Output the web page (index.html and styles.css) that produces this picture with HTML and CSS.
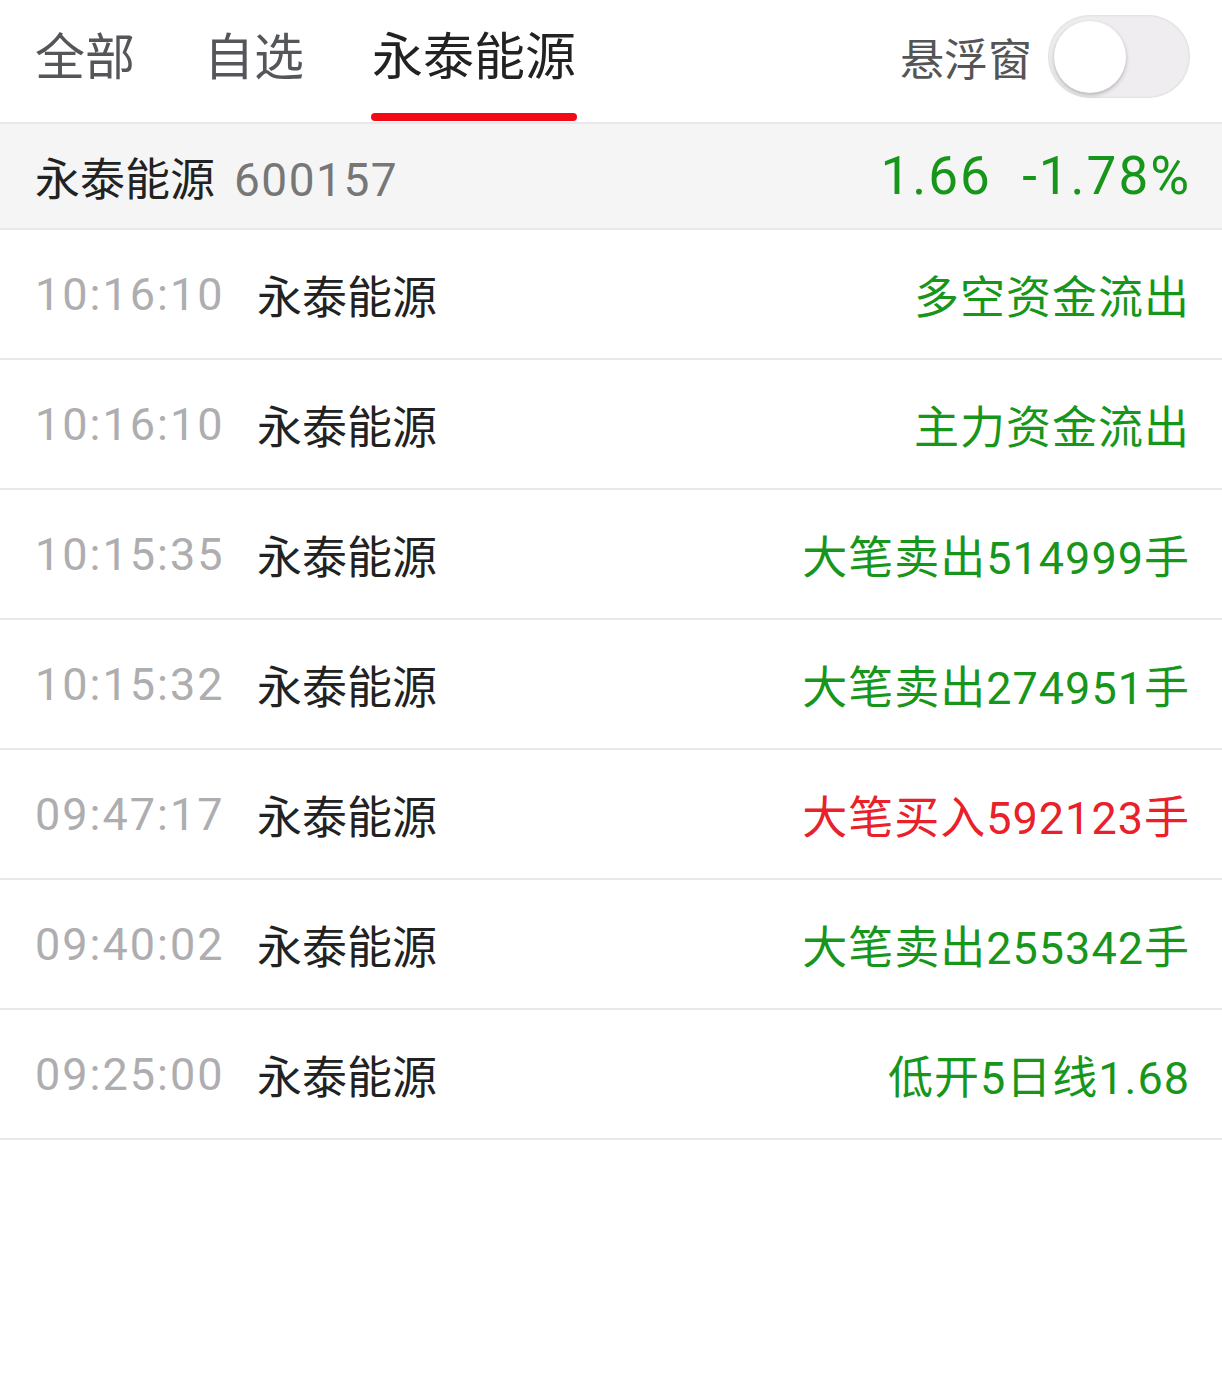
FILE: index.html
```html
<!DOCTYPE html>
<html lang="zh-CN">
<head>
    <meta charset="UTF-8">
    <meta name="viewport" content="width=device-width, initial-scale=1.0">
    <title>异动</title>
    <link rel="stylesheet" href="styles.css">
</head>
<body>
    <div class="top-bar">
        <div class="tabs">
            <div class="tab">全部</div>
            <div class="tab">自选</div>
            <div class="tab active">永泰能源</div>
        </div>
        <div class="float-switch">
            <span class="float-label">悬浮窗</span>
            <div class="toggle"><div class="knob"></div></div>
        </div>
    </div>

    <div class="stock-head">
        <div class="stock-name">永泰能源<span class="stock-code">600157</span></div>
        <div class="stock-price green">1.66&nbsp;&nbsp;-1.78%</div>
    </div>

    <div class="list">
        <div class="row">
            <span class="time">10:16:10</span>
            <span class="name">永泰能源</span>
            <span class="event green">多空资金流出</span>
        </div>
        <div class="row">
            <span class="time">10:16:10</span>
            <span class="name">永泰能源</span>
            <span class="event green">主力资金流出</span>
        </div>
        <div class="row">
            <span class="time">10:15:35</span>
            <span class="name">永泰能源</span>
            <span class="event green">大笔卖出514999手</span>
        </div>
        <div class="row">
            <span class="time">10:15:32</span>
            <span class="name">永泰能源</span>
            <span class="event green">大笔卖出274951手</span>
        </div>
        <div class="row">
            <span class="time">09:47:17</span>
            <span class="name">永泰能源</span>
            <span class="event red">大笔买入592123手</span>
        </div>
        <div class="row">
            <span class="time">09:40:02</span>
            <span class="name">永泰能源</span>
            <span class="event green">大笔卖出255342手</span>
        </div>
        <div class="row">
            <span class="time">09:25:00</span>
            <span class="name">永泰能源</span>
            <span class="event green">低开5日线1.68</span>
        </div>
    </div>
</body>
</html>
```

FILE: styles.css
```css
body {
    margin: 0;
    background: #fff;
    font-family: Roboto, "Noto Sans CJK SC", sans-serif;
    color: #222;
}

.top-bar {
    display: flex;
    justify-content: space-between;
    align-items: flex-start;
    height: 122px;
    padding: 0 32px 0 35px;
    border-bottom: 2px solid #e8e7ec;
}

.tabs {
    display: flex;
    gap: 69px;
}

.tab {
    position: relative;
    font-size: 50px;
    line-height: 50px;
    padding-top: 33px;
    height: 89px;
    color: #555659;
}

.tab.active {
    color: #222;
    font-size: 51px;
    margin-left: -1px;
}

.tab.active::after {
    content: "";
    position: absolute;
    left: -1px;
    right: -1px;
    top: 113px;
    height: 8px;
    border-radius: 4px;
    background: #f20a16;
}

.float-switch {
    display: flex;
    align-items: center;
    gap: 16px;
    padding-top: 15px;
}

.float-label {
    font-size: 44px;
    color: #555;
}

.toggle {
    width: 142px;
    height: 83px;
    border-radius: 42px;
    background: #efedef;
    box-shadow: inset 0 0 3px rgba(0, 0, 0, 0.12);
    display: flex;
    align-items: center;
    padding-left: 6px;
    box-sizing: border-box;
}

.knob {
    width: 72px;
    height: 72px;
    border-radius: 50%;
    background: #fff;
    box-shadow: 0 2px 4px rgba(0, 0, 0, 0.25);
}

.stock-head {
    display: flex;
    justify-content: space-between;
    align-items: center;
    height: 104px;
    padding: 0 31px 0 35px;
    background: #f5f5f5;
    border-bottom: 2px solid #e8e7ec;
}

.stock-name {
    font-size: 45px;
    color: #222;
}

.stock-code {
    color: #777;
    font-size: 46px;
    margin-left: 19px;
    letter-spacing: 1.5px;
}

.stock-price {
    font-size: 53px;
    letter-spacing: 2px;
}

.green {
    color: #17961b;
}

.red {
    color: #e8212a;
}

.row {
    display: flex;
    align-items: center;
    height: 128px;
    padding: 0 32px 0 35px;
    border-bottom: 2px solid #e8e7ec;
    font-size: 45px;
}

.time {
    width: 222px;
    color: #aeadb0;
    letter-spacing: 2px;
}

.name {
    color: #222;
}

.event {
    margin-left: auto;
    letter-spacing: 1px;
}
```
